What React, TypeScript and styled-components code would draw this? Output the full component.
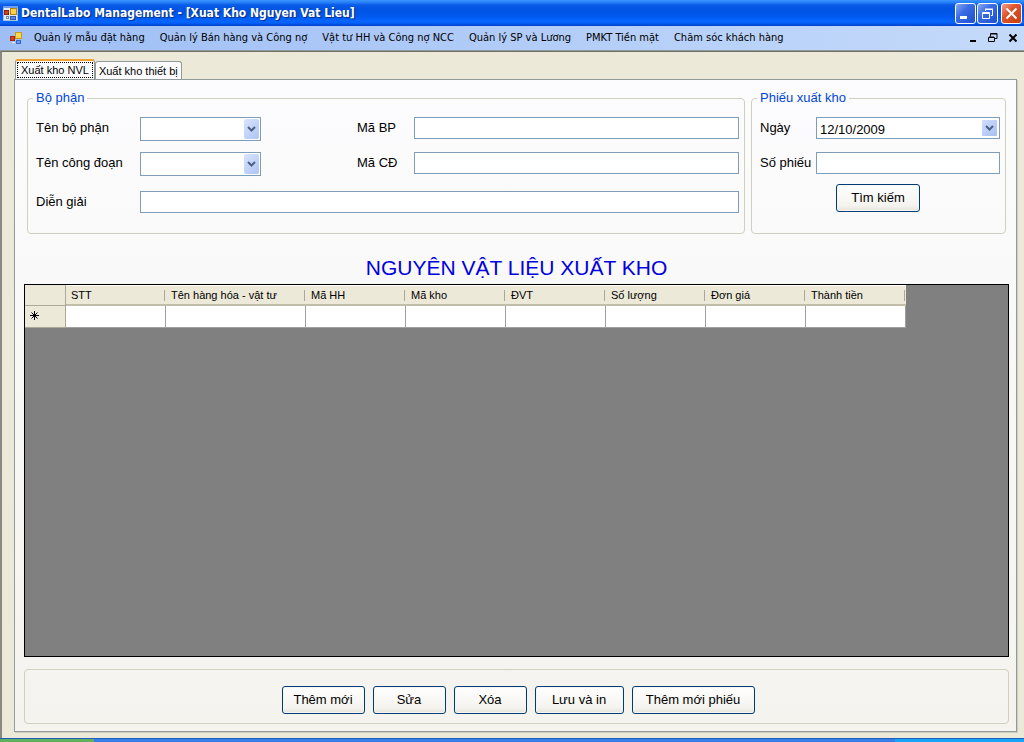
import React from "react";
import styled, { createGlobalStyle } from "styled-components";

const ui = '"Liberation Sans", Arial, sans-serif';
const menuFont = '"DejaVu Sans Condensed", "DejaVu Sans", sans-serif';

const GlobalStyle = createGlobalStyle`
  * { box-sizing: border-box; }
  body { margin: 0; font-family: ${ui}; font-size: 13px; color: #000; background: #ece9d8; }
  button, input, select { font: inherit; color: inherit; }
`;

const Screen = styled.div`
  display: flex;
  flex-direction: column;
  min-height: 100vh;
`;

const TitleBar = styled.header`
  display: flex;
  align-items: center;
  height: 26px;
  padding: 0 2px 0 3px;
  background: linear-gradient(#3a93ff 0, #2a85fb 2px, #0a5be6 5px, #0054e3 10px, #0058ee 16px, #0566ff 21px, #0560f8 23px, #0040c8 26px);
`;

const Title = styled.h1`
  flex: 1;
  margin: 0 0 0 3px;
  font: bold 12px/16px ${menuFont};
  color: #fff;
  text-shadow: 1px 1px 1px #0a2a80;
  white-space: nowrap;
`;

const CaptionButton = styled.button<{ $close?: boolean }>`
  display: grid;
  place-items: center;
  width: 21px;
  height: 21px;
  padding: 0;
  margin-left: ${(p) => (p.$close ? 3 : 1)}px;
  border: 1px solid #fff;
  border-radius: 3px;
  background: ${(p) =>
    p.$close
      ? "linear-gradient(135deg, #f0a088, #e0532c 40%, #c83c10)"
      : "linear-gradient(135deg, #8ba9f0, #3b6ce4 40%, #1c50d0)"};
`;

const MenuBar = styled.nav`
  display: flex;
  align-items: center;
  height: 25px;
  padding: 0 5px 0 9px;
  background: linear-gradient(90deg, #9ebef5, #c4dafa);
  border-bottom: 1px solid #8f9a9c;
`;

const MenuItems = styled.div`
  display: flex;
  flex: 1;
  gap: 15px;
  margin-left: 11px;
`;

const MenuItem = styled.button`
  padding: 0;
  border: 0;
  background: none;
  font: 11px/16px ${menuFont};
  white-space: nowrap;
`;

const ChildButton = styled.button`
  display: grid;
  place-items: center;
  width: 12px;
  height: 12px;
  padding: 0;
  margin-left: 8px;
  border: 0;
  background: none;
`;

const Workspace = styled.main`
  display: flex;
  flex: 1;
  flex-direction: column;
  padding: 7px 7px 6px 12px;
  border-top: 1px solid #716f64;
  border-left: 2px solid #8a8880;
  background: #ece9d8;
`;

const TabStrip = styled.div`
  display: flex;
  align-items: flex-end;
  padding-left: 1px;
  height: 20px;
`;

const Tab = styled.button<{ $active?: boolean }>`
  height: ${(p) => (p.$active ? 20 : 18)}px;
  padding: ${(p) => (p.$active ? "0 1px 1px" : "1px 3px 0")};
  border: 1px solid #919b9c;
  border-top: ${(p) => (p.$active ? "2px solid #f0a030" : "1px solid #919b9c")};
  border-bottom: 0;
  border-radius: 3px 3px 0 0;
  background: #fcfcfe;
  font-size: 11px;
  line-height: 16px;
  white-space: nowrap;

  span {
    display: block;
    padding: 0 ${(p) => (p.$active ? 4 : 0)}px;
    outline: ${(p) => (p.$active ? "1px dotted #000" : "none")};
    outline-offset: -1px;
  }
`;

const Page = styled.section`
  display: flex;
  flex: 1;
  flex-direction: column;
  padding: 10px 7px 7px 9px;
  border: 1px solid #919b9c;
  box-shadow: 1px 1px 0 #d0cebf;
  background: linear-gradient(#fcfcfe, #f4f3ee);
`;

const Filters = styled.form`
  display: grid;
  grid-template-columns: minmax(0, 1fr) 255px;
  gap: 6px;
  margin: 0 3px;
`;

const Group = styled.fieldset`
  min-width: 0;
  margin: 0;
  padding: 11px 5px 20px 8px;
  border: 1px solid #d0d0bf;
  border-radius: 4px;
`;

const Legend = styled.legend`
  margin-left: -3px;
  padding: 0 3px;
  line-height: 16px;
  color: #0046d5;
`;

const DepartmentGrid = styled.div`
  display: grid;
  grid-template-columns: 104px 121px 96px 57px minmax(0, 1fr);
  grid-template-rows: 24px 28px 22px;
  row-gap: 11px;
`;

const Label = styled.label<{ $col?: number }>`
  grid-column: ${(p) => p.$col ?? "auto"};
  line-height: 22px;
  white-space: nowrap;
`;

const TextBox = styled.input<{ $wide?: boolean }>`
  grid-column: ${(p) => (p.$wide ? "2 / -1" : "auto")};
  width: 100%;
  min-width: 0;
  height: 22px;
  padding: 0 4px;
  border: 1px solid #7f9db9;
  border-radius: 0;
  background: #fff;
`;

const ComboFrame = styled.div`
  display: grid;
  height: 24px;
  border: 1px solid #7f9db9;
  background: #fff;

  > * { grid-area: 1 / 1; }
`;

const Combo = styled.select`
  width: 100%;
  padding: 0 20px 0 4px;
  border: 0;
  appearance: none;
  background: transparent;
`;

const Arrow = styled.span`
  display: grid;
  place-items: center;
  justify-self: end;
  width: 15px;
  margin: 1px;
  border-radius: 2px;
  background: linear-gradient(135deg, #d8e4fe, #aec4f4);
  pointer-events: none;
`;

const VoucherRow = styled.div`
  display: grid;
  grid-template-columns: 56px minmax(0, 1fr);
  margin-bottom: 13px;

  &:last-of-type { margin-bottom: 0; }
`;

const DateField = styled.div`
  display: flex;
  height: 22px;
  border: 1px solid #7f9db9;
  background: #fff;
`;

const DateInput = styled.input`
  flex: 1;
  min-width: 0;
  padding: 2px 3px 0;
  border: 0;
  background: none;
`;

const DateButton = styled.button`
  display: grid;
  place-items: center;
  width: 15px;
  margin: 2px;
  padding: 0;
  border: 0;
  border-radius: 1px;
  background: linear-gradient(135deg, #d0defd, #a8bff2);
`;

const Button = styled.button<{ $width: number }>`
  width: ${(p) => p.$width}px;
  height: 28px;
  padding: 0 0 2px;
  border: 1px solid #003c74;
  border-radius: 3px;
  background: linear-gradient(#fff, #f4f3ee 80%, #e4e2d8);
  box-shadow: inset 0 0 0 1px #f4f6f8;
  white-space: nowrap;
`;

const SearchRow = styled.footer`
  display: flex;
  justify-content: center;
  padding: 10px 4px 0 0;
`;

const Heading = styled.h2`
  margin: 22px 0 4px;
  font-size: 21px;
  font-weight: 400;
  line-height: 24px;
  text-align: center;
  color: #0000e0;
`;

const GridArea = styled.div`
  flex: 1;
  border: 1px solid #000;
  background: #808080;
  overflow-x: auto;
`;

const Table = styled.table`
  width: 881px;
  table-layout: fixed;
  border-collapse: separate;
  border-spacing: 0;
  font-size: 11px;
`;

const HeadCell = styled.th`
  height: 21px;
  padding: 0 0 1px 5px;
  border-top: 1px solid #fff;
  border-bottom: 2px solid #c0bda8;
  background: linear-gradient(#aca899, #aca899) right 1px center / 1px 11px no-repeat, #ece9d8;
  font-weight: 400;
  text-align: left;
  white-space: nowrap;
`;

const CornerCell = styled.td`
  padding: 0;
  border: 1px solid #aca899;
  border-width: 0 1px 1px 0;
  background: #ece9d8;
`;

const RowHead = styled.th`
  height: 22px;
  padding: 0 0 1px 5px;
  border: 1px solid #aca899;
  border-width: 0 1px 1px 0;
  background: #ece9d8;
  text-align: left;

  svg { display: block; }
`;

const Cell = styled.td`
  border: 1px solid #a0a0a0;
  border-width: 0 1px 1px 0;
  background: #fff;
`;

const Actions = styled.div`
  display: flex;
  justify-content: center;
  gap: 8px;
  margin-top: 12px;
  padding: 16px 0 9px 3px;
  border: 1px solid #d0d0bf;
  border-radius: 4px;
`;

const Taskbar = styled.footer`
  display: grid;
  grid-template-columns: 94px 1fr 129px;
  height: 4px;
  border-top: 1px solid #1f5cc0;
`;

const TaskPart = styled.div<{ $color: string }>`
  background: ${(p) => p.$color};
`;

const columns: [string, number][] = [
  ["STT", 100],
  ["Tên hàng hóa - vật tư", 140],
  ["Mã HH", 100],
  ["Mã kho", 100],
  ["ĐVT", 100],
  ["Số lượng", 100],
  ["Đơn giá", 100],
  ["Thành tiền", 100],
];

const menus = [
  "Quản lý mẫu đặt hàng",
  "Quản lý Bán hàng và Công nợ",
  "Vật tư HH và Công nợ NCC",
  "Quản lý SP và Lương",
  "PMKT Tiền mặt",
  "Chăm sóc khách hàng",
];

const actions: [string, number][] = [
  ["Thêm mới", 83],
  ["Sửa", 73],
  ["Xóa", 73],
  ["Lưu và in", 89],
  ["Thêm mới phiếu", 123],
];

const Chevron = () => (
  <svg width="9" height="6" viewBox="0 0 9 6" aria-hidden="true">
    <path d="M1 1l3.5 3.5L8 1" fill="none" stroke="#4d6185" strokeWidth="2" />
  </svg>
);

const AppIcon = () => (
  <svg width="15" height="15" viewBox="0 0 15 15" aria-hidden="true">
    <rect x="0.5" y="0.5" width="14" height="14" fill="#dfe9f7" stroke="#a9c0e0" />
    <rect x="0" y="0" width="15" height="2" fill="#6f9cec" />
    <rect x="1.5" y="4.5" width="4" height="4" fill="#d8401c" stroke="#8a2010" />
    <rect x="7.5" y="2.5" width="6" height="6" fill="#fcd04c" stroke="#b88410" />
    <rect x="7.5" y="10.5" width="5" height="3" fill="#5a8ae8" stroke="#3058b0" />
    <rect x="3.5" y="10.5" width="2" height="2" fill="#fff" stroke="#7888a8" />
  </svg>
);

const ChildIcon = () => (
  <svg width="14" height="14" viewBox="0 0 14 14" aria-hidden="true">
    <rect x="1.5" y="5.5" width="4" height="4" fill="#d8401c" stroke="#a02810" />
    <rect x="6.5" y="1.5" width="6" height="6" fill="#fcd850" stroke="#c89818" />
    <rect x="7.5" y="9.5" width="4" height="3" fill="#6a9af4" stroke="#3a68c8" />
    <rect x="3.5" y="11" width="2" height="1" fill="#fff" />
  </svg>
);

const ComboBox = ({ id }: { id: string }) => (
  <ComboFrame>
    <Combo id={id} defaultValue="">
      <option value="" aria-label="Trống" />
    </Combo>
    <Arrow>
      <Chevron />
    </Arrow>
  </ComboFrame>
);

export default function App() {
  return (
    <Screen>
      <GlobalStyle />
      <TitleBar>
        <AppIcon />
        <Title>DentalLabo Management - [Xuat Kho Nguyen Vat Lieu]</Title>
        <CaptionButton aria-label="Minimize">
          <svg width="15" height="15" viewBox="0 0 15 15">
            <rect x="2" y="10" width="7" height="3" fill="#fff" />
          </svg>
        </CaptionButton>
        <CaptionButton aria-label="Restore">
          <svg width="15" height="15" viewBox="0 0 15 15" fill="none" stroke="#fff">
            <path d="M5.5 5V3.5h7v6H11M5 3h8" />
            <path d="M2.5 6.5h7v6h-7zM2 7.5h8" />
          </svg>
        </CaptionButton>
        <CaptionButton aria-label="Close" $close>
          <svg width="15" height="15" viewBox="0 0 15 15">
            <path d="M2.5 2.5l10 10M12.5 2.5l-10 10" stroke="#fff" strokeWidth="2" />
          </svg>
        </CaptionButton>
      </TitleBar>
      <MenuBar>
        <ChildIcon />
        <MenuItems>
          {menus.map((m) => (
            <MenuItem key={m}>{m}</MenuItem>
          ))}
        </MenuItems>
        <ChildButton aria-label="Minimize window">
          <svg width="10" height="10" viewBox="0 0 10 10">
            <rect x="2" y="7" width="6" height="2" />
          </svg>
        </ChildButton>
        <ChildButton aria-label="Restore window">
          <svg width="10" height="10" viewBox="0 0 10 10" fill="none" stroke="#000">
            <path d="M3 1h6M2.5 3.5V.5H9v5H7M.5 4.5h6v4h-6zM1 4h5" />
          </svg>
        </ChildButton>
        <ChildButton aria-label="Close window">
          <svg width="10" height="10" viewBox="0 0 10 10">
            <path d="M1.5 1.5l7 7M8.5 1.5l-7 7" stroke="#000" strokeWidth="2" />
          </svg>
        </ChildButton>
      </MenuBar>
      <Workspace>
        <TabStrip role="tablist">
          <Tab role="tab" aria-selected="true" $active>
            <span>Xuất kho NVL</span>
          </Tab>
          <Tab role="tab" aria-selected="false">
            <span>Xuất kho thiết bị</span>
          </Tab>
        </TabStrip>
        <Page>
          <Filters onSubmit={(e) => e.preventDefault()}>
            <Group>
              <Legend>Bộ phận</Legend>
              <DepartmentGrid>
                <Label htmlFor="dept">Tên bộ phận</Label>
                <ComboBox id="dept" />
                <Label htmlFor="deptCode" $col={4}>Mã BP</Label>
                <TextBox id="deptCode" />
                <Label htmlFor="stage">Tên công đoạn</Label>
                <ComboBox id="stage" />
                <Label htmlFor="stageCode" $col={4}>Mã CĐ</Label>
                <TextBox id="stageCode" />
                <Label htmlFor="note">Diễn giải</Label>
                <TextBox id="note" $wide />
              </DepartmentGrid>
            </Group>
            <Group>
              <Legend>Phiếu xuất kho</Legend>
              <VoucherRow>
                <Label htmlFor="date">Ngày</Label>
                <DateField>
                  <DateInput id="date" defaultValue="12/10/2009" />
                  <DateButton type="button" aria-label="Chọn ngày">
                    <Chevron />
                  </DateButton>
                </DateField>
              </VoucherRow>
              <VoucherRow>
                <Label htmlFor="voucher">Số phiếu</Label>
                <TextBox id="voucher" />
              </VoucherRow>
              <SearchRow>
                <Button $width={84}>Tìm kiếm</Button>
              </SearchRow>
            </Group>
          </Filters>
          <Heading>NGUYÊN VẬT LIỆU XUẤT KHO</Heading>
          <GridArea>
            <Table>
              <colgroup>
                <col style={{ width: 41 }} />
                {columns.map(([name, width]) => (
                  <col key={name} style={{ width }} />
                ))}
              </colgroup>
              <thead>
                <tr>
                  <CornerCell />
                  {columns.map(([name]) => (
                    <HeadCell key={name} scope="col">{name}</HeadCell>
                  ))}
                </tr>
              </thead>
              <tbody>
                <tr>
                  <RowHead scope="row" aria-label="Dòng mới">
                    <svg width="10" height="10" viewBox="0 0 10 10" fill="none" stroke="#000">
                      <path d="M4.5 0v9M0 4.5h9M1.5 1.5l6 6M7.5 1.5l-6 6" />
                    </svg>
                  </RowHead>
                  {columns.map(([name]) => (
                    <Cell key={name} />
                  ))}
                </tr>
              </tbody>
            </Table>
          </GridArea>
          <Actions>
            {actions.map(([name, width]) => (
              <Button key={name} $width={width}>{name}</Button>
            ))}
          </Actions>
        </Page>
      </Workspace>
      <Taskbar>
        <TaskPart $color="#5fb05f" />
        <TaskPart $color="#3480e8" />
        <TaskPart $color="#18a4f4" />
      </Taskbar>
    </Screen>
  );
}
